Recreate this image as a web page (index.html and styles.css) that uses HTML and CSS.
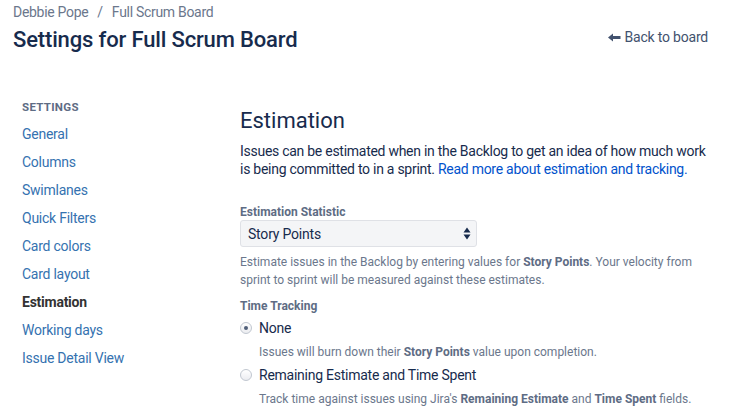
FILE: index.html
```html
<!DOCTYPE html>
<html>
<head>
<meta charset="utf-8">
<link rel="stylesheet" href="styles.css">
</head>
<body>
<div class="page">
  <header class="header">
    <div class="header-left">
      <div class="crumbs"><span>Debbie Pope</span><span class="sep">/</span><span>Full Scrum Board</span></div>
      <h1 class="title">Settings for Full Scrum Board</h1>
    </div>
    <a class="back" href="#"><svg class="back-icon" width="13" height="9" viewBox="0 0 13 9"><path d="M0 4.5 L5 0.5 L5 3 L12.5 3 L12.5 6 L5 6 L5 8.5 Z" fill="#42526e"/></svg>Back to board</a>
  </header>
  <div class="body">
    <nav class="side">
      <div class="side-head">SETTINGS</div>
      <a class="side-item" href="#">General</a>
      <a class="side-item" href="#">Columns</a>
      <a class="side-item" href="#">Swimlanes</a>
      <a class="side-item" href="#">Quick Filters</a>
      <a class="side-item" href="#">Card colors</a>
      <a class="side-item" href="#">Card layout</a>
      <span class="side-item active">Estimation</span>
      <a class="side-item" href="#">Working days</a>
      <a class="side-item" href="#">Issue Detail View</a>
    </nav>
    <main class="main">
      <h2 class="h2">Estimation</h2>
      <p class="intro">Issues can be estimated when in the Backlog to get an idea of how much work is being committed to in a sprint. <a href="#">Read more about estimation and tracking.</a></p>
      <div class="label">Estimation Statistic</div>
      <div class="select"><span>Story Points</span><svg width="8" height="13" viewBox="0 0 8 13"><path d="M4 0.5 L7.5 5.5 L0.5 5.5 Z M4 12.5 L7.5 7.5 L0.5 7.5 Z" fill="#172b4d"/></svg></div>
      <p class="help">Estimate issues in the Backlog by entering values for <b>Story Points</b>. Your velocity from sprint to sprint will be measured against these estimates.</p>
      <div class="label label2">Time Tracking</div>
      <div class="radio-row"><span class="radio checked"></span><span class="radio-text">None</span></div>
      <p class="help indent">Issues will burn down their <b>Story Points</b> value upon completion.</p>
      <div class="radio-row"><span class="radio"></span><span class="radio-text">Remaining Estimate and Time Spent</span></div>
      <p class="help indent">Track time against issues using Jira's <b>Remaining Estimate</b> and <b>Time Spent</b> fields.</p>
    </main>
  </div>
</div>
</body>
</html>
```
FILE: styles.css
```css
* { box-sizing: border-box; }
html, body { margin: 0; padding: 0; background: #fff; }
body { font-family: Roboto, "Liberation Sans", Arial, sans-serif; color: #172b4d; }
a { text-decoration: none; }
.page { padding: 3px 21px 0 13px; }
.header { display: flex; justify-content: space-between; align-items: flex-start; }
.crumbs { font-size: 14px; color: #6b778c; line-height: 18px; letter-spacing: -0.3px; }
.sep { margin: 0 9px; }
.title { margin: 4px 0 0; font-size: 22px; font-weight: 500; line-height: 30px; color: #172b4d; letter-spacing: -0.15px; }
.back { margin-top: 25px; color: #42526e; font-size: 14px; line-height: 18px; display: flex; align-items: center; letter-spacing: -0.2px; }
.back-icon { margin-right: 3px; }
.body { display: flex; margin-top: 44px; margin-right: -12px; }
.side { width: 227px; padding-left: 9px; display: flex; flex-direction: column; flex: none; }
.side-head { font-size: 11.5px; font-weight: 700; color: #5e6c84; letter-spacing: 0.3px; line-height: 16px; margin-bottom: 10px; }
.side-item { font-size: 14px; line-height: 18px; color: #3572b0; margin-bottom: 10px; letter-spacing: -0.25px; }
.side-item.active { color: #333; font-weight: 700; }
.main { flex: 1; max-width: 476px; padding-top: 7px; }
.h2 { margin: 0; font-size: 22px; font-weight: 400; line-height: 30px; color: #172b4d; }
.intro { margin: 6px 0 0; font-size: 14px; line-height: 18px; color: #172b4d; letter-spacing: -0.27px; }
.intro a { color: #0052cc; }
.label { margin-top: 26px; font-size: 12px; font-weight: 700; color: #5e6c84; line-height: 16px; }
.label2 { margin-top: 9px; }
.select { margin-top: 0; width: 237px; height: 27px; background: #f4f5f7; border: 1px solid #dfe1e6; border-radius: 3px; display: flex; align-items: center; justify-content: space-between; padding: 0 5px 0 7px; font-size: 14px; color: #172b4d; letter-spacing: -0.2px; }
.help { margin: 6px 0 0; font-size: 12px; line-height: 18px; color: #6b778c; }
.help b { color: #5e6c84; font-weight: 700; }
.indent { margin-left: 19px; margin-top: 5px; }
.radio-row { display: flex; align-items: center; margin-top: 4px; height: 20px; }
.radio { width: 12px; height: 12px; border-radius: 50%; border: 1px solid #c1c7d0; background: linear-gradient(#fff, #ebecf0); margin: 0 7px 0 0; position: relative; flex: none; }
.radio.checked::after { content: ""; position: absolute; left: 3px; top: 3px; width: 4px; height: 4px; border-radius: 50%; background: #505f79; }
.radio-text { font-size: 14px; color: #172b4d; letter-spacing: -0.25px; }
```
